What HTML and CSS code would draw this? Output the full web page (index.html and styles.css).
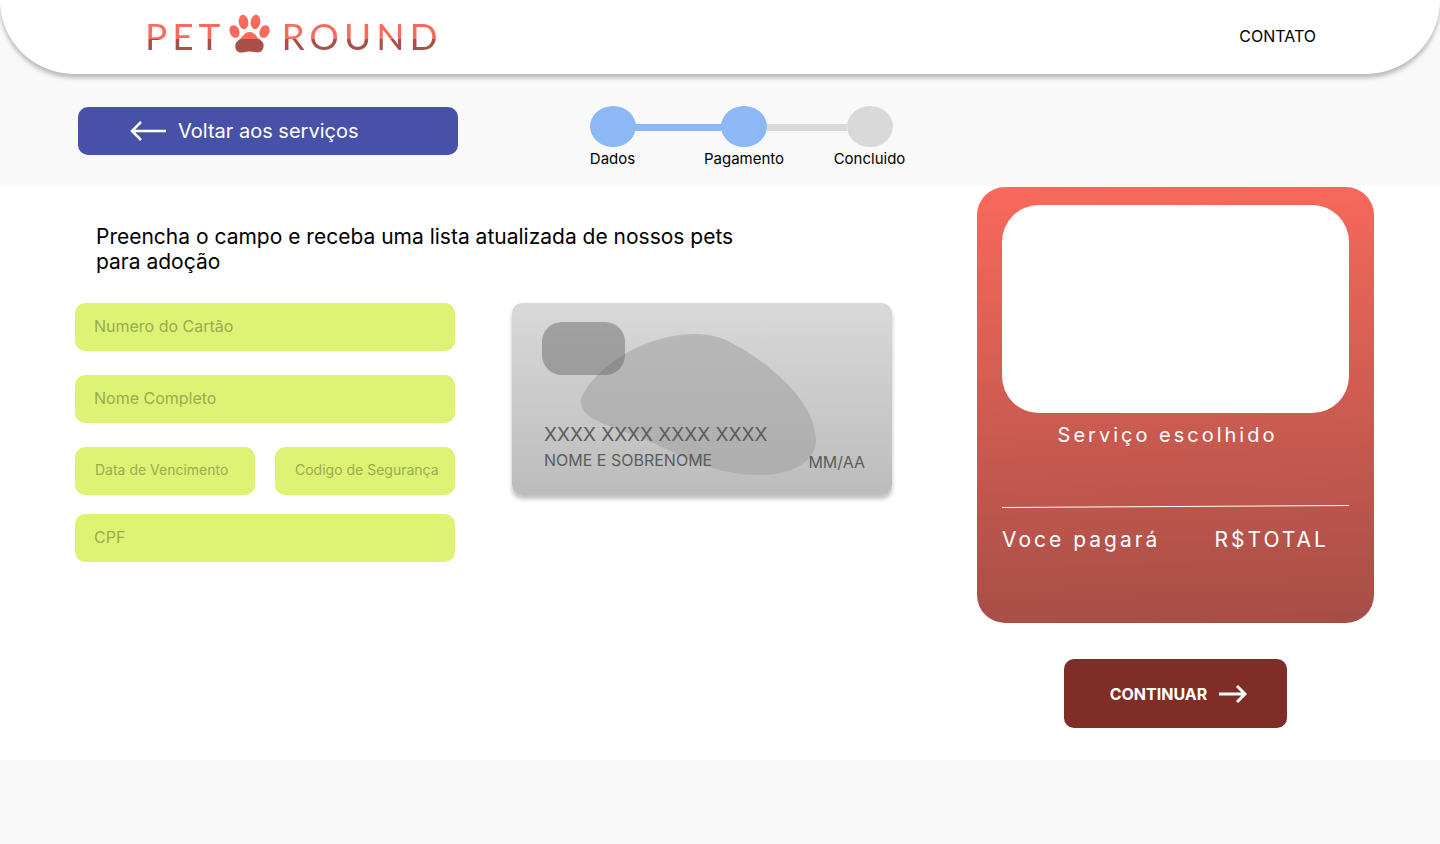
FILE: index.html
```html
<!DOCTYPE html>
<html lang="pt-BR">
<head>
<meta charset="utf-8">
<meta name="viewport" content="width=device-width, initial-scale=1">
<title>Pet Round - Pagamento</title>
<link rel="stylesheet" href="styles.css">
</head>
<body>
<header class="site-header">
  <a class="logo" href="#">
    <span class="logo-text">PET</span>
    <svg class="logo-paw" viewBox="0 0 42 38" aria-hidden="true">
      <defs>
        <linearGradient id="paw" x1="0" y1="0" x2="0" y2="38" gradientUnits="userSpaceOnUse">
          <stop offset="0.64" stop-color="#f9695c"/>
          <stop offset="0.64" stop-color="#a85047"/>
        </linearGradient>
      </defs>
      <g fill="url(#paw)">
        <ellipse cx="14.500" cy="7" rx="4.800" ry="7.200" transform="rotate(-8 14.500 7)"/>
        <ellipse cx="26.500" cy="7" rx="4.800" ry="7.200" transform="rotate(8 26.500 7)"/>
        <ellipse cx="5.500" cy="16.500" rx="4.800" ry="6.600" transform="rotate(-24 5.500 16.500)"/>
        <ellipse cx="35.500" cy="16.500" rx="4.800" ry="6.600" transform="rotate(24 35.500 16.500)"/>
        <path d="M20.500 17C24.500 17 26.500 20 28.500 22.500C31 25.300 35 26.500 34.600 31C34.300 35.500 31.500 38 27.500 37.300C22.500 36.300 19 36 14 37.400C9 38.300 6.300 35.500 6.300 31C6.300 26.800 10 25.300 12.500 22.500C14.700 20 16.500 17 20.500 17Z"/>
      </g>
    </svg>
    <span class="logo-text">ROUND</span>
  </a>
  <nav><a class="nav-link" href="#">CONTATO</a></nav>
</header>

<section class="progress-bar">
  <a class="back" href="#">
    <svg class="back-arrow" viewBox="0 0 36 20" aria-hidden="true"><path d="M36 10H2M11 1L2 10L11 19"/></svg>
    Voltar aos serviços
  </a>
  <ol class="steps">
    <li class="step done"><span class="dot"></span>Dados</li>
    <li class="link done" aria-hidden="true"></li>
    <li class="step done"><span class="dot"></span>Pagamento</li>
    <li class="link" aria-hidden="true"></li>
    <li class="step"><span class="dot"></span>Concluido</li>
  </ol>
</section>

<main class="checkout">
  <section class="payment">
    <h1 class="title">Preencha o campo e receba uma lista atualizada de nossos pets para adoção</h1>
    <div class="payment-columns">
      <form class="fields" id="payment-form">
        <input class="field" type="text" placeholder="Numero do Cartão" aria-label="Numero do Cartão">
        <input class="field" type="text" placeholder="Nome Completo" aria-label="Nome Completo">
        <div class="field-row">
          <input class="field small" type="text" placeholder="Data de Vencimento" aria-label="Data de Vencimento">
          <input class="field small" type="text" placeholder="Codigo de Segurança" aria-label="Codigo de Segurança">
        </div>
        <input class="field" type="text" placeholder="CPF" aria-label="CPF">
      </form>
      <div class="card">
        <svg class="card-shape" viewBox="0 0 380 192" aria-hidden="true">
          <path d="M69 100C69 80 120 31 183 31C197 31 209 34 218 39C258 60 304 99 304 138C303 160 278 172 248 172C195 172 160 147 132 136C105 125 69 117 69 100Z"/>
        </svg>
        <div class="chip"></div>
        <div class="card-number">XXXX XXXX XXXX XXXX</div>
        <div class="card-footer"><span>NOME E SOBRENOME</span><span class="card-date">MM/AA</span></div>
      </div>
    </div>
  </section>

  <aside class="order">
    <div class="summary">
      <div class="summary-image"></div>
      <p class="service">Serviço escolhido</p>
      <svg class="divider" viewBox="0 0 347 3" preserveAspectRatio="none" aria-hidden="true"><path d="M0 2.500L347 0.500"/></svg>
      <div class="total"><span>Voce pagará</span><span>R$TOTAL</span></div>
    </div>
    <button class="continue" type="submit" form="payment-form">
      CONTINUAR
      <svg class="continue-arrow" viewBox="0 0 28 18" aria-hidden="true"><path d="M0 9H26M18 1L26 9L18 17"/></svg>
    </button>
  </aside>
</main>
</body>
</html>
```
FILE: styles.css
```css
* { box-sizing: border-box; }

body {
  margin: 0;
  background: #f9f9f9;
  color: #000;
  font-family: Inter, "Liberation Sans", sans-serif;
  font-size: 16px;
}

a { color: inherit; text-decoration: none; }

.site-header {
  display: flex;
  align-items: center;
  justify-content: space-between;
  height: 74px;
  padding: 0 124px 2px 145px;
  background: #fff;
  border-radius: 0 0 74px 74px;
  box-shadow: 0 4px 4px rgba(0, 0, 0, 0.25);
}

.logo { display: flex; align-items: center; }

.logo-text {
  font-family: Lato, sans-serif;
  font-size: 37px;
  line-height: 46px;
  letter-spacing: 5px;
  color: transparent;
  background: linear-gradient(#f9695c 26px, #a85047 26px);
  background-clip: text;
  -webkit-background-clip: text;
}

.logo-paw { width: 42px; height: 38px; margin: 0 10px 4px 4px; overflow: visible; }

.progress-bar {
  display: grid;
  grid-template-columns: 380fr 302fr 338fr;
  gap: 132px;
  align-items: start;
  padding: 32px 78px 16px;
}

.back {
  display: flex;
  align-items: center;
  gap: 12px;
  height: 48px;
  margin-top: 1px;
  padding-left: 52px;
  border-radius: 10px;
  background: #4851a8;
  color: #fff;
  font-size: 20px;
}

.back-arrow { width: 36px; height: 20px; fill: none; stroke: #fff; stroke-width: 2.5; }

.steps {
  display: flex;
  margin: 0;
  padding: 0;
  list-style: none;
  font-size: 15px;
  line-height: 23px;
}

.step {
  display: flex;
  flex-direction: column;
  align-items: center;
  width: 45px;
  white-space: nowrap;
}

.dot { width: 46px; height: 41px; border-radius: 50%; background: #d9d9d9; }
.link { flex: 80; height: 7px; margin-top: 18px; background: #d9d9d9; }
.link.done { flex: 86; }
.done .dot, .link.done { background: #8cb9f5; }

.checkout {
  display: grid;
  grid-template-columns: 817fr 397fr;
  gap: 85px;
  padding: 1px 66px 32px 75px;
  background: #fff;
}

.title {
  max-width: 680px;
  margin: 37px 0 29px 21px;
  font-size: 21px;
  font-weight: 400;
  line-height: 25px;
}

.payment-columns {
  display: grid;
  grid-template-columns: 1fr 1fr;
  gap: 57px;
  align-items: start;
}

.fields { display: flex; flex-direction: column; gap: 24px; }
.field-row { display: grid; grid-template-columns: 1fr 1fr; gap: 20px; margin-bottom: -5px; }

.field {
  width: 100%;
  height: 48px;
  padding: 0 19px 2px;
  border: 0;
  border-radius: 10px;
  background: #def374;
  color: #333;
  font-family: inherit;
  font-size: 16px;
}

.field.small { padding: 0 16px 3px 20px; font-size: 14px; }
.field::placeholder { color: #9bab4d; opacity: 1; }

.card {
  position: relative;
  padding: 19px 27px 23px 30px;
  border-radius: 10px;
  background: linear-gradient(#d9d9d9, #bcbcbc);
  box-shadow: 0 4px 4px rgba(0, 0, 0, 0.25);
  color: #5c5c5c;
}

.card-shape { position: absolute; inset: 0; width: 100%; height: 100%; fill: rgba(160, 160, 160, 0.55); }
.chip { position: relative; width: 83px; height: 53px; border-radius: 20px; background: rgba(90, 90, 90, 0.43); }

.card-number {
  position: relative;
  margin: 48px 0 0 2px;
  font-size: 19px;
  line-height: 24px;
}

.card-footer {
  position: relative;
  display: flex;
  justify-content: space-between;
  margin-left: 2px;
  padding-top: 3px;
  line-height: 20px;
}

.card-date { padding-top: 2px; }

.order { display: flex; flex-direction: column; align-items: center; }

.summary {
  width: 100%;
  padding: 18px 25px 70px;
  border-radius: 28px;
  background: linear-gradient(178deg, #f9695c, #a54e46);
  color: #fff;
  font-size: 21px;
  letter-spacing: 3px;
}

.summary-image { height: 208px; border-radius: 37px; background: #fff; }
.service { margin: 10px 16px 0 0; font-size: 20px; line-height: 24px; text-align: center; }
.divider { display: block; width: 100%; height: 3px; margin: 58px 0 19px; fill: none; stroke: #fff; }
.total { display: flex; justify-content: space-between; padding-right: 20px; line-height: 26px; }

.continue {
  display: flex;
  align-items: center;
  justify-content: center;
  gap: 12px;
  width: 223px;
  height: 69px;
  margin-top: 36px;
  padding: 0 0 0 6px;
  border: 0;
  border-radius: 10px;
  background: #802d27;
  color: #fff;
  font-family: inherit;
  font-size: 16px;
  font-weight: 700;
}

.continue-arrow { width: 28px; height: 18px; fill: none; stroke: #fff; stroke-width: 3; }
```
